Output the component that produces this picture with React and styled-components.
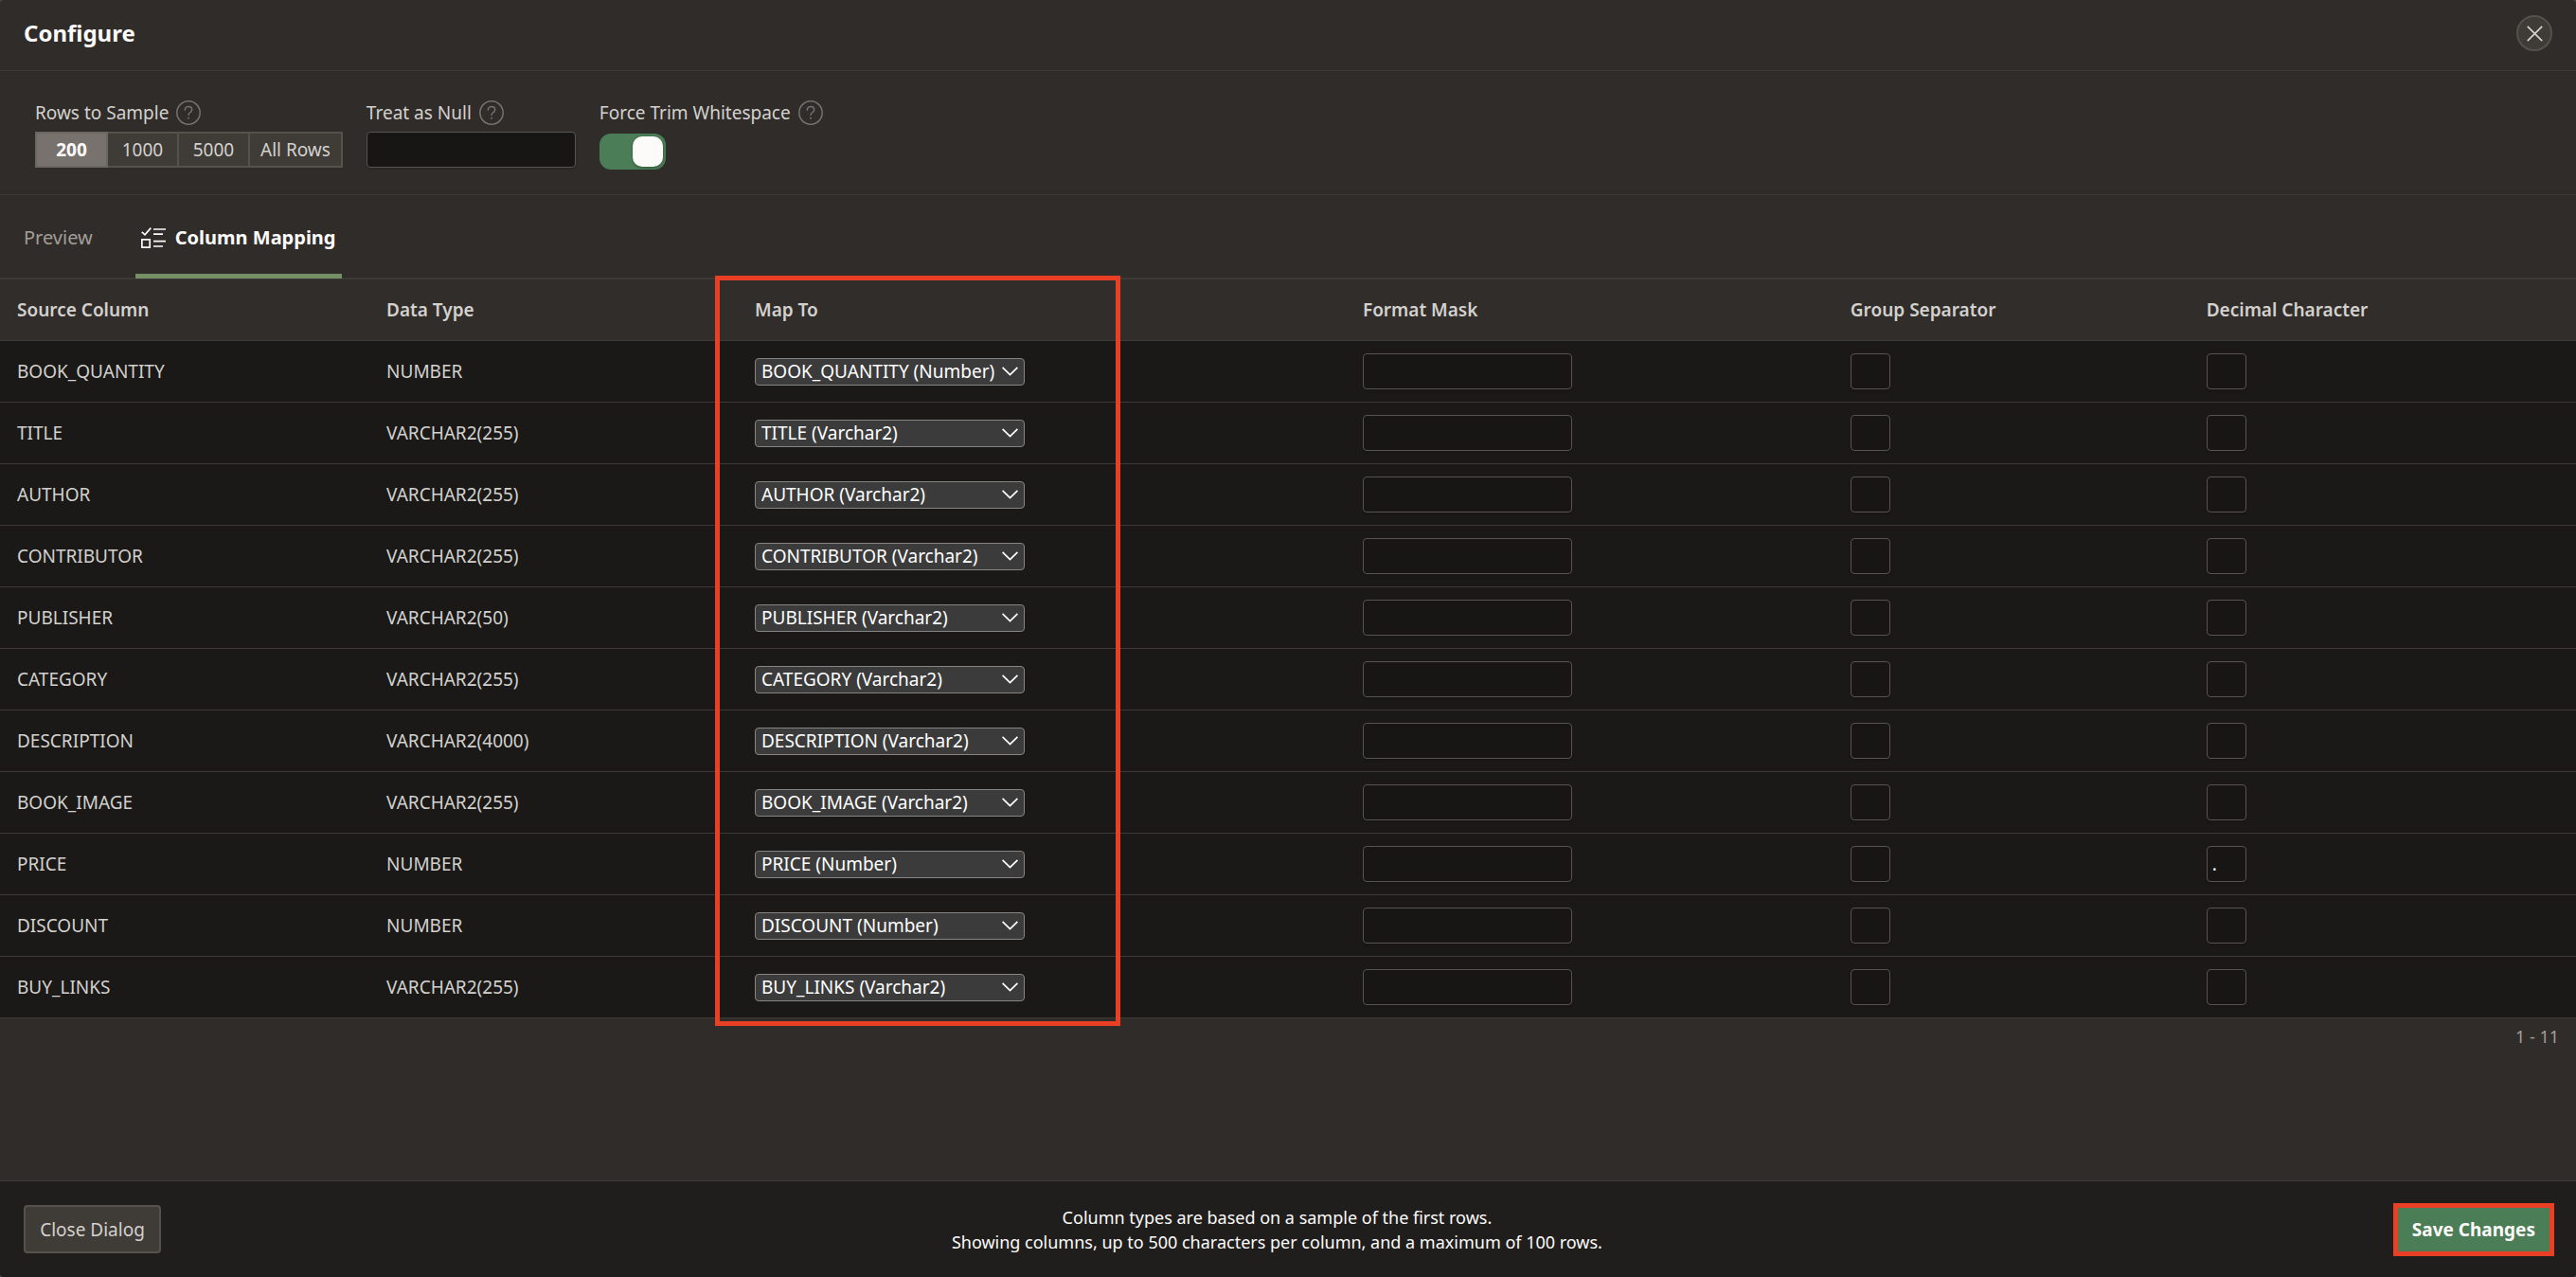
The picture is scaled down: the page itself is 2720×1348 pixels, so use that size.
import React, { useState } from 'react';
import styled, { createGlobalStyle, css } from 'styled-components';

const color = {
  dialog: '#302c29',
  table: '#1a1917',
  footer: '#201e1c',
  field: '#171614',
  line: '#3d3a36',
  button: '#3f3b36',
  buttonBorder: '#55514b',
  inputBorder: '#575350',
  text: '#d3d1ce',
  muted: '#a29e99',
  bright: '#fcfbfa',
  green: '#4b7d57',
  tab: '#759067',
  mark: '#e93f25',
};

const GlobalStyle = createGlobalStyle`
  *, *::before, *::after { box-sizing: border-box; }
  body { margin: 0; background: #4d4945; }
  body, button, input, select {
    font-family: "Noto Sans", "Open Sans", sans-serif;
    font-size: 19px;
    line-height: 26px;
    color: ${color.text};
  }
`;

const Dialog = styled.main`
  display: flex;
  flex-direction: column;
  min-height: 100vh;
  border-radius: 4px;
  overflow: hidden;
  background: ${color.dialog};
`;

const Header = styled.header`
  display: flex;
  align-items: center;
  justify-content: space-between;
  padding: 16px 25px 20px;
  border-bottom: 1px solid ${color.line};
`;

const Title = styled.h1`
  margin: 0;
  font-size: 24px;
  line-height: 38px;
  font-weight: 700;
  color: ${color.bright};
`;

const CloseButton = styled.button`
  display: grid;
  place-items: center;
  width: 38px;
  height: 38px;
  padding: 0;
  border: 2px solid ${color.buttonBorder};
  border-radius: 50%;
  background: ${color.button};
`;

const Settings = styled.section`
  display: flex;
  gap: 25px;
  padding: 31px 37px 26px;
  border-bottom: 1px solid ${color.line};
`;

const Field = styled.div`
  display: flex;
  flex-direction: column;
  gap: 7px;
`;

const FieldHead = styled.div`
  display: flex;
  align-items: center;
  gap: 8px;
`;

const HelpButton = styled.button`
  display: block;
  width: 26px;
  height: 26px;
  padding: 0;
  border: 0;
  background: none;

  svg { display: block; }
`;

const Segments = styled.div`
  display: flex;
`;

const Segment = styled.label`
  min-width: 77px;
  height: 38px;
  padding: 0 11px;
  border: 2px solid ${color.buttonBorder};
  background: ${color.button};
  text-align: center;
  line-height: 34px;

  & + & { margin-left: -2px; }

  ${(p) => p.$active && css`
    z-index: 1;
    border-color: #6b6661;
    background: #77726d;
    color: ${color.bright};
    font-weight: 700;
  `}
`;

const HiddenRadio = styled.input`
  position: absolute;
  opacity: 0;
  width: 1px;
  height: 1px;
  margin: 0;
`;

const TextInput = styled.input`
  display: block;
  width: ${(p) => (p.$short ? '42px' : '221px')};
  height: 38px;
  padding: 0 5px;
  border: 1px solid ${color.inputBorder};
  border-radius: 4px;
  background: ${color.field};
  color: ${color.bright};
  box-shadow: 0 2px 2px rgba(0, 0, 0, 0.1);
`;

const Toggle = styled.input`
  appearance: none;
  width: 70px;
  height: 38px;
  margin: 2px 0 0;
  padding: 3px;
  border-radius: 12px;
  background: #76716c;

  &::after {
    content: '';
    display: block;
    width: 32px;
    height: 32px;
    border-radius: 10px;
    background: ${color.bright};
    box-shadow: 0 1px 3px rgba(0, 0, 0, 0.35);
  }

  &:checked { background: ${color.green}; }
  &:checked::after { margin-left: auto; }
`;

const Tabs = styled.div`
  display: flex;
  gap: 39px;
  height: 89px;
  padding: 0 19px;
  box-shadow: inset 0 -2px 0 ${color.line};
`;

const Tab = styled.button`
  display: flex;
  align-items: center;
  gap: 10px;
  height: 88px;
  padding: 6px 6px 0;
  border: 0;
  border-bottom: 5px solid ${(p) => (p.$active ? color.tab : 'transparent')};
  background: none;
  font-size: 20px;
  font-weight: ${(p) => (p.$active ? 700 : 400)};
  color: ${(p) => (p.$active ? color.bright : color.muted)};
`;

const TableWrap = styled.section`
  position: relative;
`;

const Table = styled.table`
  width: 100%;
  table-layout: fixed;
  border-collapse: separate;
  border-spacing: 0;
  background: ${color.table};
`;

const Col = styled.col`
  width: ${(p) => p.$width};
`;

const HeadCell = styled.th`
  height: 65px;
  padding: 0 18px;
  border-bottom: 1px solid ${color.line};
  background: #312d2a;
  text-align: left;
  font-weight: 600;
`;

const Cell = styled.td`
  height: 65px;
  padding: 0 18px;
  border-bottom: 1px solid ${color.line};
`;

const SelectBox = styled.div`
  display: grid;
  grid-template: 30px / 285px;
  align-items: center;

  > * { grid-area: 1 / 1; }
`;

const Select = styled.select`
  appearance: none;
  width: 100%;
  height: 29px;
  padding: 0 26px 0 6px;
  border: 1px solid #858585;
  border-radius: 4px;
  background: #3b3b3b;
  color: #fff;
`;

const Chevron = styled.svg`
  justify-self: end;
  margin-right: 7px;
  pointer-events: none;
`;

const Highlight = styled.div`
  position: absolute;
  top: -4px;
  bottom: -8px;
  left: 27.76%;
  width: 15.74%;
  border: 5px solid ${color.mark};
  pointer-events: none;
`;

const RowCount = styled.p`
  margin: 0;
  padding: 6px 18px;
  text-align: right;
  font-size: 18px;
  color: ${color.muted};
`;

const Footer = styled.footer`
  display: flex;
  align-items: center;
  margin-top: auto;
  min-height: 102px;
  padding: 0 23px 0 25px;
  border-top: 1px solid ${color.line};
  background: ${color.footer};
`;

const Note = styled.p`
  flex: 1;
  margin: 0;
  text-align: center;
  font-size: 18px;
  color: ${color.bright};
`;

const DialogButton = styled.button`
  height: 51px;
  min-width: 145px;
  padding: 0 15px;
  border: 2px solid ${color.buttonBorder};
  border-radius: 4px;
  background: ${color.button};

  ${(p) => p.$primary && css`
    height: 56px;
    min-width: 170px;
    border: 5px solid ${color.mark};
    border-radius: 0;
    background: ${color.green};
    color: ${color.bright};
    font-weight: 700;
  `}
`;

const COLUMNS = [
  { title: 'Source Column', width: '14.34%' },
  { title: 'Data Type', width: '14.3%' },
  { title: 'Map To', width: '23.6%' },
  { title: 'Format Mask', width: '18.93%' },
  { title: 'Group Separator', width: '13.82%' },
  { title: 'Decimal Character', width: 'auto' },
];

const ROWS = [
  ['BOOK_QUANTITY', 'NUMBER', 'Number'],
  ['TITLE', 'VARCHAR2(255)', 'Varchar2'],
  ['AUTHOR', 'VARCHAR2(255)', 'Varchar2'],
  ['CONTRIBUTOR', 'VARCHAR2(255)', 'Varchar2'],
  ['PUBLISHER', 'VARCHAR2(50)', 'Varchar2'],
  ['CATEGORY', 'VARCHAR2(255)', 'Varchar2'],
  ['DESCRIPTION', 'VARCHAR2(4000)', 'Varchar2'],
  ['BOOK_IMAGE', 'VARCHAR2(255)', 'Varchar2'],
  ['PRICE', 'NUMBER', 'Number', '.'],
  ['DISCOUNT', 'NUMBER', 'Number'],
  ['BUY_LINKS', 'VARCHAR2(255)', 'Varchar2'],
];

const TARGETS = ROWS.map(([name, , kind]) => `${name} (${kind})`);

function Help({ topic }) {
  return (
    <HelpButton type="button" aria-label={`Help: ${topic}`}>
      <svg width="26" height="26" viewBox="0 0 26 26" fill="none" stroke="#75716d" strokeWidth="1.5" strokeLinecap="round">
        <circle cx="13" cy="13" r="12.2" />
        <path d="M9.3 10.2c0-2.2 1.6-3.6 3.7-3.6s3.7 1.4 3.7 3.4c0 2.6-3.7 2.9-3.7 5.4" />
        <path d="M13 18.7v.1" strokeWidth="2" />
      </svg>
    </HelpButton>
  );
}

function MappingIcon() {
  return (
    <svg width="26" height="22" viewBox="0 0 26 22" fill="none" stroke={color.bright} strokeWidth="1.7" aria-hidden="true">
      <path d="M.8 4.8l3.2 3L10.3.6" />
      <path d="M13 2h13M13 7.2h10M13 14.7h13M13 20h10" />
      <rect x=".9" y="12.9" width="8.3" height="8.2" />
    </svg>
  );
}

function MapSelect({ source, initial }) {
  return (
    <SelectBox>
      <Select aria-label={`Map ${source} to`} defaultValue={initial}>
        {TARGETS.map((t) => (
          <option key={t}>{t}</option>
        ))}
      </Select>
      <Chevron width="17" height="10" viewBox="0 0 17 10" fill="none" stroke="#fff" strokeWidth="1.7" aria-hidden="true">
        <path d="M.6.9l7.9 7.7L16.4.9" />
      </Chevron>
    </SelectBox>
  );
}

export default function App() {
  const [sample, setSample] = useState('200');

  return (
    <Dialog>
      <GlobalStyle />
      <Header>
        <Title>Configure</Title>
        <CloseButton type="button" aria-label="Close">
          <svg width="17" height="17" viewBox="0 0 17 17" stroke={color.text} strokeWidth="1.7" aria-hidden="true">
            <path d="M.8.8l15.4 15.4M16.2.8L.8 16.2" />
          </svg>
        </CloseButton>
      </Header>

      <Settings>
        <Field>
          <FieldHead>
            <span id="sample-label">Rows to Sample</span>
            <Help topic="Rows to Sample" />
          </FieldHead>
          <Segments role="radiogroup" aria-labelledby="sample-label">
            {['200', '1000', '5000', 'All Rows'].map((option) => (
              <Segment key={option} $active={option === sample}>
                <HiddenRadio
                  type="radio"
                  name="sample"
                  checked={option === sample}
                  onChange={() => setSample(option)}
                />
                {option}
              </Segment>
            ))}
          </Segments>
        </Field>
        <Field>
          <FieldHead>
            <label htmlFor="treat-null">Treat as Null</label>
            <Help topic="Treat as Null" />
          </FieldHead>
          <TextInput id="treat-null" type="text" />
        </Field>
        <Field>
          <FieldHead>
            <label htmlFor="trim">Force Trim Whitespace</label>
            <Help topic="Force Trim Whitespace" />
          </FieldHead>
          <Toggle id="trim" type="checkbox" role="switch" defaultChecked />
        </Field>
      </Settings>

      <Tabs role="tablist">
        <Tab type="button" role="tab" aria-selected="false">Preview</Tab>
        <Tab type="button" role="tab" aria-selected="true" $active>
          <MappingIcon />
          Column Mapping
        </Tab>
      </Tabs>

      <TableWrap>
        <Table>
          <colgroup>
            {COLUMNS.map((c) => (
              <Col key={c.title} $width={c.width} />
            ))}
          </colgroup>
          <thead>
            <tr>
              {COLUMNS.map((c) => (
                <HeadCell key={c.title} scope="col">{c.title}</HeadCell>
              ))}
            </tr>
          </thead>
          <tbody>
            {ROWS.map(([name, type, kind, decimal = '']) => (
              <tr key={name}>
                <Cell>{name}</Cell>
                <Cell>{type}</Cell>
                <Cell><MapSelect source={name} initial={`${name} (${kind})`} /></Cell>
                <Cell><TextInput type="text" aria-label={`${name} format mask`} /></Cell>
                <Cell><TextInput $short type="text" aria-label={`${name} group separator`} /></Cell>
                <Cell><TextInput $short type="text" aria-label={`${name} decimal character`} defaultValue={decimal} /></Cell>
              </tr>
            ))}
          </tbody>
        </Table>
        <Highlight />
      </TableWrap>
      <RowCount>1 - 11</RowCount>

      <Footer>
        <DialogButton type="button">Close Dialog</DialogButton>
        <Note>
          Column types are based on a sample of the first rows.
          <br />
          Showing columns, up to 500 characters per column, and a maximum of 100 rows.
        </Note>
        <DialogButton type="button" $primary>Save Changes</DialogButton>
      </Footer>
    </Dialog>
  );
}
